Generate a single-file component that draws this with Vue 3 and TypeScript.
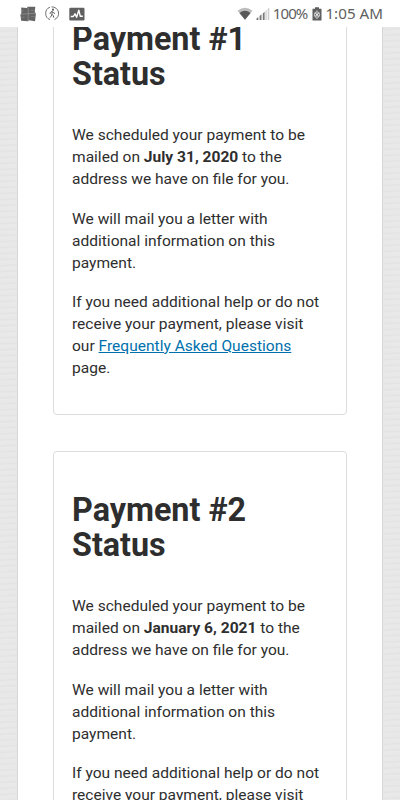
<script setup lang="ts">
interface Payment {
  number: number
  date: string
}

const payments: Payment[] = [
  { number: 1, date: 'July 31, 2020' },
  { number: 2, date: 'January 6, 2021' },
]
</script>

<template>
  <div class="screen">
    <header class="status-bar">
      <div class="notifications">
        <svg class="icon-grid" width="16" height="16" viewBox="0 0 16 16">
          <path d="M1.2 1.5L7 1.9L7.6 .8L15.3 .8L14.8 6L15.9 8L15 15.2L9 14.2L8 15.2L1.2 14.8L.4 9L1.4 7Z" fill="#646464" />
          <path d="M8 1.5L8.4 6.5L8 15M.5 8.3L8 7.7L15.8 7.3" stroke="#a0a0a0" stroke-width=".6" fill="none" />
          <path d="M.8 4.8L4 4.6M10.8 4.4L15 4.2M1 11.4L4.5 11.1M11 10.6L15.2 10.4" stroke="#8c8c8c" stroke-width=".6" fill="none" />
        </svg>
        <svg class="icon-walk" width="15" height="15" viewBox="0 0 15 15" fill="none" stroke="#606060">
          <path d="M5 1.2A6.6 6.6 0 0 0 5 13.6M6.5 .9A6.6 6.6 0 0 1 9.5 13.6" stroke-width=".9" />
          <circle cx="8" cy="3.7" r="1.1" fill="#606060" stroke="none" />
          <path d="M7.3 5.3L6.9 8.2L8.3 9.7L8.8 11.7M6.9 8.2L6.3 10L5 11.6M7.2 5.3L5.3 6.5L5 7.9M7.7 5.6L8.6 6.9L10 7.5" stroke-width="1" />
        </svg>
        <svg class="icon-activity" width="16" height="14" viewBox="0 0 16 14">
          <rect x=".3" y=".8" width="15.2" height="12.6" rx="1.2" fill="#606060" />
          <path d="M1.7 9.5H4.3L6 6.8L7.6 10.2L9.8 3.2L11.3 9.3H13.8" fill="none" stroke="#fff" stroke-width="1.4" stroke-linejoin="round" />
        </svg>
      </div>
      <div class="system">
        <svg class="icon-wifi" width="16" height="14" viewBox="0 0 16 14">
          <path d="M.5 3.7Q8 -2.2 15.5 3.7L8 12.7Z" fill="#bdbdbd" />
          <path d="M2.5 6Q8 1.7 13.5 6L8 12.7Z" fill="#595959" />
        </svg>
        <svg class="icon-signal" width="14" height="14" viewBox="0 0 14 14">
          <path d="M.5 11.5L2.3 10V13H.5Z M3.6 9L5.5 7.3V13H3.6Z M6.8 6.4L8.6 4.8V13H6.8Z" fill="#777" />
          <path d="M9.4 4.1L10.7 2.8V13H9.4Z M11.7 1.9L13.3 .5V13H11.7Z" fill="#cdcdcd" />
        </svg>
        <span class="percent">100%</span>
        <svg class="icon-battery" width="10" height="14" viewBox="0 0 10 14">
          <path d="M3 .3H7V1.7H9.5V13.5H.5V1.7H3Z" fill="#5e5e5e" />
          <path d="M5 3.5V12M3.5 4.8Q1.2 7.8 3.5 10.5M6.5 4.8Q8.8 7.8 6.5 10.5M3.2 6.2L6.8 9.2M6.8 6.2L3.2 9.2" stroke="#fff" stroke-width=".8" fill="none" />
        </svg>
        <span class="clock">1:05 AM</span>
      </div>
    </header>

    <div class="viewport">
      <main class="page">
        <section v-for="payment in payments" :key="payment.number" class="card">
          <h2>Payment #{{ payment.number }} Status</h2>
          <p>We scheduled your payment to be mailed on <strong>{{ payment.date }}</strong> to the address we have on file for you.</p>
          <p>We will mail you a letter with additional information on this payment.</p>
          <p>If you need additional help or do not receive your payment, please visit our <a href="#">Frequently Asked Questions</a> page.</p>
        </section>
      </main>
    </div>
  </div>
</template>

<style>
body {
  margin: 0;
}
</style>

<style scoped>
.screen {
  display: flex;
  flex-direction: column;
  width: 400px;
  height: 800px;
  overflow: hidden;
  background: #fff;
  font-family: Roboto, "Liberation Sans", sans-serif;
  color: #2e2e2e;
}

.status-bar {
  display: flex;
  flex: none;
  justify-content: space-between;
  box-sizing: border-box;
  height: 27px;
  padding: 0 17px 0 20px;
  background: #fff;
  color: #606060;
  font: 15px/27px "Noto Sans", sans-serif;
}

.notifications,
.system {
  display: flex;
  align-items: center;
}

.icon-walk {
  margin-left: 9px;
}

.icon-activity {
  margin-left: 9px;
}

.icon-signal {
  margin: 0 3px 0 3px;
}

.percent {
  letter-spacing: -0.9px;
}

.icon-battery {
  margin: 0 3px 0 5px;
}

.clock {
  font-size: 15.2px;
}

.viewport {
  flex: 1;
  min-height: 0;
  overflow: hidden;
  padding: 0 17px;
  background: repeating-linear-gradient(177deg, #e9e9e9 0, #e8e8e8 3px, #e3e3e3 4.5px, #e9e9e9 6px);
}

.page {
  display: flex;
  flex-direction: column;
  gap: 36px;
  box-sizing: border-box;
  margin-top: -47px;
  padding: 0 35px;
  border: solid #d6d6d6;
  border-width: 0 1px;
  background: #fff;
}

.card {
  box-sizing: border-box;
  height: 435px;
  padding: 40.6px 18px 0;
  border: 1px solid #dcdcdc;
  border-radius: 4px;
}

h2 {
  margin: 0 0 32px;
  font-size: 32.3px;
  line-height: 35.4px;
  font-weight: 700;
}

p {
  margin: 0 0 17.2px;
  font-size: 15.56px;
  line-height: 22px;
}

strong {
  font-weight: 700;
}

a {
  color: #0071ad;
  text-decoration: underline;
}
</style>
